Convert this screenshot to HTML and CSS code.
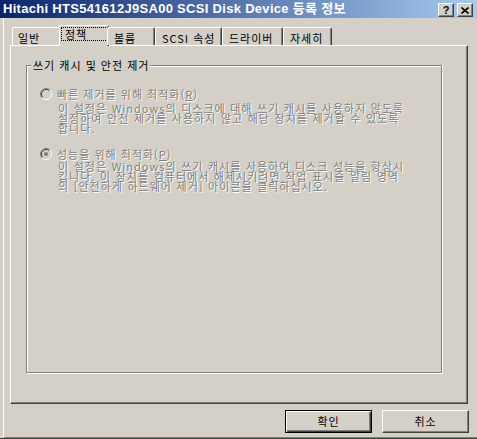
FILE: index.html
```html
<!DOCTYPE html>
<html lang="ko">
<head>
<meta charset="utf-8">
<title>등록 정보</title>
<link rel="stylesheet" href="styles.css">
</head>
<body>
<div class="window">
  <div class="titlebar">
    <span class="title">Hitachi HTS541612J9SA00 SCSI Disk Device 등록 정보</span>
    <div class="caption-buttons">
      <span class="cbtn help">?</span>
      <span class="cbtn close"><svg width="8" height="7" viewBox="0 0 8 7"><path d="M0.5 0.5 L7.5 6.5 M7.5 0.5 L0.5 6.5" stroke="#000" stroke-width="1.6" fill="none"/></svg></span>
    </div>
  </div>
  <div class="client">
    <div class="tabs">
      <div class="tab tab-general">일반</div>
      <div class="tab active tab-policy"><span class="focus">정책</span></div>
      <div class="tab tab-volume">볼륨</div>
      <div class="tab tab-scsi">SCSI 속성</div>
      <div class="tab tab-driver">드라이버</div>
      <div class="tab tab-details">자세히</div>
    </div>
    <div class="panel">
      <div class="group">
        <div class="group-head">
          <span class="gh-left"></span>
          <span class="gh-title">쓰기 캐시 및 안전 제거</span>
          <span class="gh-right"></span>
        </div>
        <div class="group-body">
          <div class="option">
            <div class="radio-row">
              <svg class="radio" width="12" height="12" viewBox="0 0 12 12">
                <circle cx="6" cy="6" r="4" fill="#D4D0C8"/>
                <path d="M2.11 9.89 A5.5 5.5 0 0 1 9.89 2.11" stroke="#808080" fill="none"/>
                <path d="M9.89 2.11 A5.5 5.5 0 0 1 2.11 9.89" stroke="#ffffff" fill="none"/>
                <path d="M2.82 9.18 A4.5 4.5 0 0 1 9.18 2.82" stroke="#404040" fill="none"/>
                <path d="M9.18 2.82 A4.5 4.5 0 0 1 2.82 9.18" stroke="#D4D0C8" fill="none"/>
              </svg>
              <span class="label disabled">빠른 제거를 위해 최적화(<u>R</u>)</span>
            </div>
            <p class="desc disabled">이 설정은 Windows의 디스크에 대해 쓰기 캐시를 사용하지 않도록<br>설정하여 안전 제거를 사용하지 않고 해당 장치를 제거할 수 있도록<br>합니다.</p>
          </div>
          <div class="option second">
            <div class="radio-row">
              <svg class="radio" width="12" height="12" viewBox="0 0 12 12">
                <circle cx="6" cy="6" r="4" fill="#D4D0C8"/>
                <path d="M2.11 9.89 A5.5 5.5 0 0 1 9.89 2.11" stroke="#808080" fill="none"/>
                <path d="M9.89 2.11 A5.5 5.5 0 0 1 2.11 9.89" stroke="#ffffff" fill="none"/>
                <path d="M2.82 9.18 A4.5 4.5 0 0 1 9.18 2.82" stroke="#404040" fill="none"/>
                <path d="M9.18 2.82 A4.5 4.5 0 0 1 2.82 9.18" stroke="#D4D0C8" fill="none"/>
                <circle cx="6" cy="6" r="2" fill="#808080"/>
              </svg>
              <span class="label disabled">성능을 위해 최적화(<u>P</u>)</span>
            </div>
            <p class="desc disabled second-desc">이 설정은 Windows의 쓰기 캐시를 사용하여 디스크 성능을 향상시<br>킵니다. 이 장치를 컴퓨터에서 해제시키려면 작업 표시줄 알림 영역<br>의 [안전하게 하드웨어 제거] 아이콘을 클릭하십시오.</p>
          </div>
        </div>
      </div>
    </div>
    <div class="footer">
      <button class="btn default">확인</button>
      <button class="btn">취소</button>
    </div>
  </div>
</div>
</body>
</html>
```
FILE: styles.css
```css
* { box-sizing: border-box; }
html, body { margin: 0; padding: 0; }
body {
  background: #D4D0C8;
  font-family: "Noto Sans CJK KR", "Liberation Sans", sans-serif;
  font-size: 11px;
  letter-spacing: 1px;
  color: #000;
}
.window {
  width: 477px;
  height: 439px;
  background: #D4D0C8;
  display: flex;
  flex-direction: column;
  overflow: hidden;
  border-bottom: 1px solid #404040;
}
.titlebar {
  height: 18px;
  flex: none;
  display: flex;
  align-items: flex-start;
  background: linear-gradient(to right, #0A246A, #A6CAF0);
  padding: 0 4px 0 3px;
}
.title {
  flex: 1;
  color: #fff;
  font-family: "Liberation Sans", "Noto Sans CJK KR", sans-serif;
  font-weight: bold;
  font-size: 13px;
  letter-spacing: 0.3px;
  white-space: nowrap;
  line-height: 18px;
}
.caption-buttons {
  display: flex;
  gap: 3px;
  padding-top: 3px;
}
.cbtn {
  width: 16px;
  height: 14px;
  border: 1px solid;
  border-color: #fff #404040 #404040 #fff;
  box-shadow: inset -1px -1px #808080;
  background: #D4D0C8;
  display: flex;
  align-items: center;
  justify-content: center;
}
.help {
  font-family: "Liberation Sans", sans-serif;
  font-weight: bold;
  font-size: 11px;
  letter-spacing: 0;
  line-height: 12px;
}
.close svg { display: block; }
.client {
  flex: 1;
  display: flex;
  flex-direction: column;
  margin-left: 3px;
  border-left: 1px solid #fff;
  border-bottom: 1px solid #808080;
  padding: 7px 9px 0 6px;
}
.tabs {
  display: flex;
  align-items: flex-end;
  height: 20px;
  padding-left: 2px;
  position: relative;
  z-index: 1;
}
.tab {
  height: 18px;
  border: 1px solid #fff;
  border-bottom: none;
  border-right-color: #404040;
  box-shadow: inset -1px 0 #808080;
  border-radius: 2px 2px 0 0;
  padding: 4px 0 0 6px;
  line-height: 12px;
  white-space: nowrap;
  background: #D4D0C8;
}
.tab.active {
  height: 21px;
  margin: 0 -2px -1px;
  padding: 1px 0 0 1px;
}
.focus {
  display: block;
  height: 14px;
  border: 1px dotted #000;
  padding: 1px 0 0 3px;
  line-height: 11px;
}
.tab-general { width: 49px; padding-left: 5px; }
.tab-policy { width: 50px; }
.tab-volume { width: 48px; }
.tab-scsi { width: 67px; }
.tab-driver { width: 61px; }
.tab-details { width: 49px; }
.panel {
  height: 359px;
  flex: none;
  border: 1px solid;
  border-color: #fff #404040 #404040 #fff;
  box-shadow: inset -1px -1px #808080;
  padding: 13px 0 0 15px;
}
.group { width: 416px; }
.group-head {
  display: flex;
  height: 12px;
}
.gh-left {
  width: 5px;
  margin-top: 6px;
  border-top: 1px solid #808080;
  border-left: 1px solid #808080;
  box-shadow: inset 1px 1px #fff;
}
.gh-title {
  padding: 0 1px 0 2px;
  line-height: 12px;
  white-space: nowrap;
}
.gh-right {
  flex: 1;
  margin-top: 6px;
  border-top: 1px solid #808080;
  border-right: 1px solid #808080;
  box-shadow: inset 0 1px #fff, 1px 0 #fff;
}
.group-body {
  height: 302px;
  border: 1px solid #808080;
  border-top: none;
  box-shadow: inset 1px 0 #fff, 1px 1px #fff;
  padding-top: 17px;
}
.radio-row {
  display: flex;
  align-items: center;
  height: 12px;
  line-height: 12px;
  padding-left: 13px;
  white-space: nowrap;
}
.radio { display: block; margin-right: 5px; flex: none; }
.disabled {
  color: #808080;
  text-shadow: 1px 1px 0 #fff;
}
.desc {
  margin: 3px 0 0 31px;
  line-height: 10px;
  white-space: nowrap;
  word-spacing: 0.5px;
}
.option.second { margin-top: 15px; }
.desc.second-desc { margin-top: 1px; }
.footer {
  display: flex;
  justify-content: flex-end;
  gap: 10px;
  margin-top: 6px;
  margin-right: -1px;
}
.btn {
  width: 87px;
  height: 23px;
  margin: 0;
  padding: 0 0 1px;
  font-family: "Noto Sans CJK KR", "Liberation Sans", sans-serif;
  font-size: 11px;
  letter-spacing: 1px;
  line-height: 12px;
  color: #000;
  background: #D4D0C8;
  border: 1px solid;
  border-color: #fff #404040 #404040 #fff;
  box-shadow: inset -1px -1px #808080;
  border-radius: 0;
}
.btn.default {
  border-color: #000;
  box-shadow: inset 1px 1px #fff, inset -1px -1px #404040, inset -2px -2px #808080;
}
```
